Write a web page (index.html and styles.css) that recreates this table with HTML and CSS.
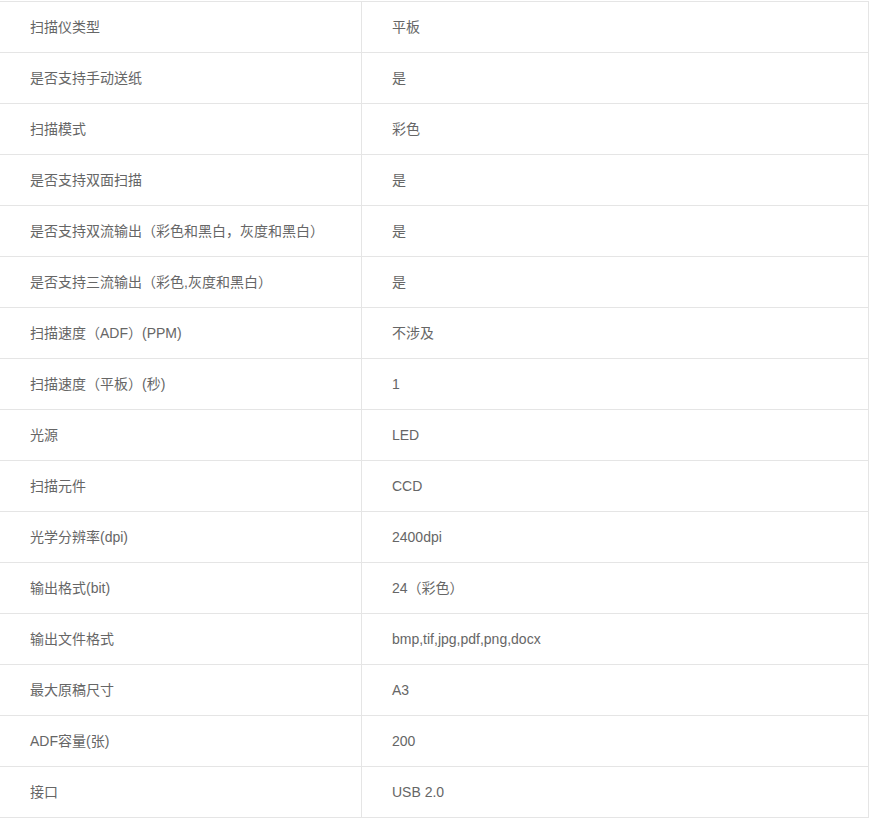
FILE: index.html
```html
<!DOCTYPE html>
<html lang="zh-CN">
<head>
<meta charset="utf-8">
<title>参数</title>
<link rel="stylesheet" href="styles.css">
</head>
<body>
<table class="spec">
  <tbody>
    <tr><td class="k">扫描仪类型</td><td class="v">平板</td></tr>
    <tr><td class="k">是否支持手动送纸</td><td class="v">是</td></tr>
    <tr><td class="k">扫描模式</td><td class="v">彩色</td></tr>
    <tr><td class="k">是否支持双面扫描</td><td class="v">是</td></tr>
    <tr><td class="k">是否支持双流输出（彩色和黑白，灰度和黑白）</td><td class="v">是</td></tr>
    <tr><td class="k">是否支持三流输出（彩色,灰度和黑白）</td><td class="v">是</td></tr>
    <tr><td class="k">扫描速度（ADF）(PPM)</td><td class="v">不涉及</td></tr>
    <tr><td class="k">扫描速度（平板）(秒)</td><td class="v">1</td></tr>
    <tr><td class="k">光源</td><td class="v">LED</td></tr>
    <tr><td class="k">扫描元件</td><td class="v">CCD</td></tr>
    <tr><td class="k">光学分辨率(dpi)</td><td class="v">2400dpi</td></tr>
    <tr><td class="k">输出格式(bit)</td><td class="v">24（彩色）</td></tr>
    <tr><td class="k">输出文件格式</td><td class="v">bmp,tif,jpg,pdf,png,docx</td></tr>
    <tr><td class="k">最大原稿尺寸</td><td class="v">A3</td></tr>
    <tr><td class="k">ADF容量(张)</td><td class="v">200</td></tr>
    <tr><td class="k">接口</td><td class="v">USB 2.0</td></tr>
  </tbody>
</table>
</body>
</html>
```

FILE: styles.css
```css
html, body {
  margin: 0;
  padding: 0;
  background: #fff;
}
body {
  padding-top: 1px;
  font-family: "Liberation Sans", "Noto Sans CJK SC", sans-serif;
  font-size: 14px;
  color: #666;
}
.spec {
  border-collapse: collapse;
  table-layout: fixed;
  width: 869px;
  border-top: 1px solid #e5e5e5;
  border-right: 1px solid #e5e5e5;
}
.spec td {
  height: 50px;
  padding: 0 0 0 30px;
  border-bottom: 1px solid #e5e5e5;
  vertical-align: middle;
  line-height: 20px;
  white-space: nowrap;
}
.spec td.k {
  width: 331px;
}
.spec td.v {
  border-left: 1px solid #e5e5e5;
}
```
